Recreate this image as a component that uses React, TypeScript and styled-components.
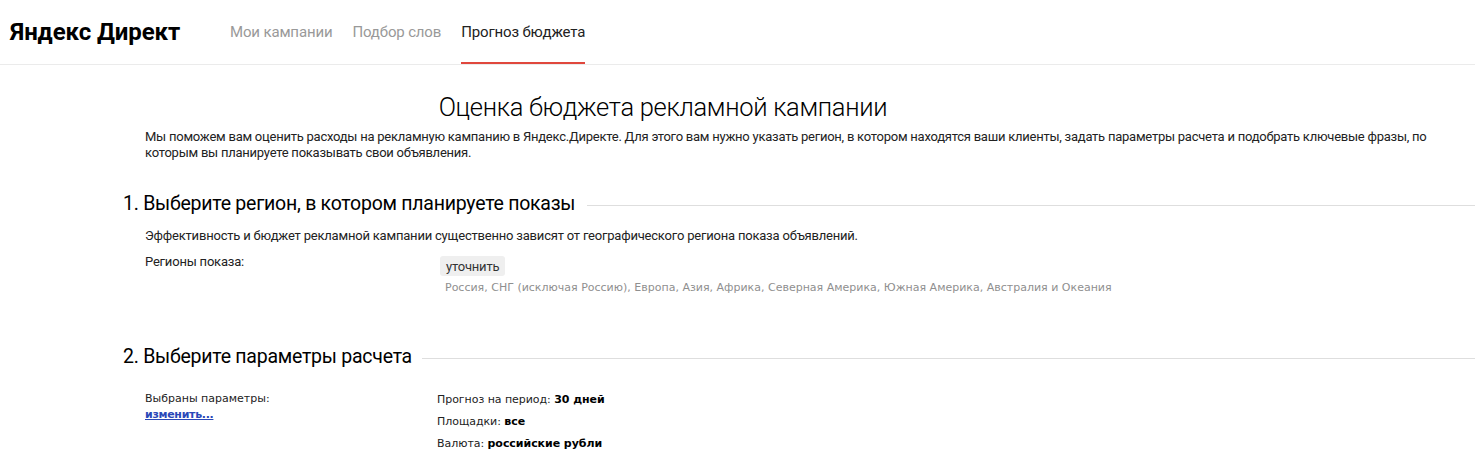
import React from "react";
import styled, { createGlobalStyle } from "styled-components";

const GlobalStyle = createGlobalStyle`
  html, body {
    margin: 0;
    padding: 0;
    background: #fff;
  }
  body {
    font-family: Roboto, "Noto Sans", Arial, sans-serif;
    color: #222;
  }
`;

const Header = styled.header`
  display: flex;
  align-items: stretch;
  height: 64px;
  padding: 0 0 0 10px;
  border-bottom: 1px solid #ebebeb;
`;

const Logo = styled.div`
  display: flex;
  align-items: center;
  width: 220px;
  font-weight: 700;
  font-size: 24px;
  letter-spacing: -0.1px;
  color: #000;
`;

const Nav = styled.nav`
  display: flex;
  gap: 20px;
`;

const NavItem = styled.a<{ $active?: boolean }>`
  display: flex;
  align-items: center;
  box-sizing: border-box;
  padding-top: 2px;
  border-bottom: 2px solid ${(p) => (p.$active ? "#e0473d" : "transparent")};
  font-size: 15px;
  letter-spacing: -0.15px;
  color: ${(p) => (p.$active ? "#222" : "#999")};
  text-decoration: none;
  cursor: pointer;
`;

const Main = styled.main`
  padding: 25px 0 0 123px;
`;

const Title = styled.h1`
  width: 1080px;
  margin: 0;
  font-weight: 300;
  font-size: 25.5px;
  line-height: 30px;
  letter-spacing: -0.3px;
  text-align: center;
  color: #000;
  transform: translateY(2px);
`;

const Lead = styled.p`
  margin: 9px 30px 0 22px;
  font-size: 13px;
  line-height: 16px;
  letter-spacing: -0.24px;
`;

const SectionHead = styled.h2<{ $second?: boolean }>`
  display: flex;
  align-items: center;
  gap: ${(p) => (p.$second ? 10 : 12)}px;
  margin: ${(p) => (p.$second ? 50 : 31)}px 0 0;
  font-weight: 400;
  font-size: 19.5px;
  line-height: 24px;
  letter-spacing: -0.25px;
  color: #000;

  &::after {
    content: "";
    flex-grow: 1;
    height: 1px;
    margin-top: 2px;
    background: #dedede;
  }
`;

const Body = styled.div`
  padding-left: 22px;
`;

const Note = styled.p`
  margin: 12px 0 0;
  font-size: 13px;
  line-height: 16px;
  letter-spacing: -0.2px;
`;

const Row = styled.div<{ $top: number }>`
  display: grid;
  grid-template-columns: 292px 1fr;
  margin-top: ${(p) => p.$top}px;
`;

const Label = styled.div`
  font-size: 13px;
  line-height: 16px;
  letter-spacing: -0.2px;
`;

const RefineButton = styled.button`
  display: block;
  height: 20px;
  margin: 2px 0 0 3px;
  padding: 0 6px;
  border: 0;
  border-radius: 3px;
  background: #efefef;
  font-family: Roboto, Arial, sans-serif;
  font-size: 13px;
  letter-spacing: -0.2px;
  color: #333;
  cursor: pointer;
`;

const RegionList = styled.div`
  margin: 5px 0 0 8px;
  font-family: "DejaVu Sans", Verdana, sans-serif;
  font-size: 11px;
  line-height: 14px;
  color: #8f8f8f;
`;

const ParamLabel = styled.div`
  padding-top: 2px;
  font-family: "DejaVu Sans", Verdana, sans-serif;
  font-size: 11px;
  line-height: 16px;
  letter-spacing: 0;
  color: #222;
`;

const ChangeLink = styled.a`
  display: block;
  font-weight: 700;
  letter-spacing: -0.3px;
  color: #2a48b8;
  text-decoration: underline;
  cursor: pointer;
`;

const ParamList = styled.ul`
  margin: 0;
  padding: 0;
  list-style: none;
  font-family: "DejaVu Sans", Verdana, sans-serif;
  font-size: 11px;
  line-height: 21.5px;
  letter-spacing: -0.05px;
  color: #222;

  li:last-child {
    margin-top: 1px;
  }

  b {
    font-weight: 700;
    color: #000;
  }
`;

const params = [
  { name: "Прогноз на период", value: "30 дней" },
  { name: "Площадки", value: "все" },
  { name: "Валюта", value: "российские рубли" },
];

export default function App() {
  return (
    <>
      <GlobalStyle />
      <Header>
        <Logo>Яндекс Директ</Logo>
        <Nav>
          <NavItem>Мои кампании</NavItem>
          <NavItem>Подбор слов</NavItem>
          <NavItem $active>Прогноз бюджета</NavItem>
        </Nav>
      </Header>
      <Main>
        <Title>Оценка бюджета рекламной кампании</Title>
        <Lead>
          Мы поможем вам оценить расходы на рекламную кампанию в Яндекс.Директе. Для этого вам нужно указать
          регион, в котором находятся ваши клиенты, задать параметры расчета и подобрать ключевые фразы, по
          которым вы планируете показывать свои объявления.
        </Lead>

        <SectionHead>1. Выберите регион, в котором планируете показы</SectionHead>
        <Body>
          <Note>
            Эффективность и бюджет рекламной кампании существенно зависят от географического региона показа
            объявлений.
          </Note>
          <Row $top={10}>
            <Label>Регионы показа:</Label>
            <div>
              <RefineButton>уточнить</RefineButton>
              <RegionList>
                Россия, СНГ (исключая Россию), Европа, Азия, Африка, Северная Америка, Южная Америка, Австралия
                и Океания
              </RegionList>
            </div>
          </Row>
        </Body>

        <SectionHead $second>2. Выберите параметры расчета</SectionHead>
        <Body>
          <Row $top={20}>
            <ParamLabel>
              Выбраны параметры:
              <ChangeLink>изменить...</ChangeLink>
            </ParamLabel>
            <ParamList>
              {params.map((p) => (
                <li key={p.name}>
                  {p.name}: <b>{p.value}</b>
                </li>
              ))}
            </ParamList>
          </Row>
        </Body>
      </Main>
    </>
  );
}
